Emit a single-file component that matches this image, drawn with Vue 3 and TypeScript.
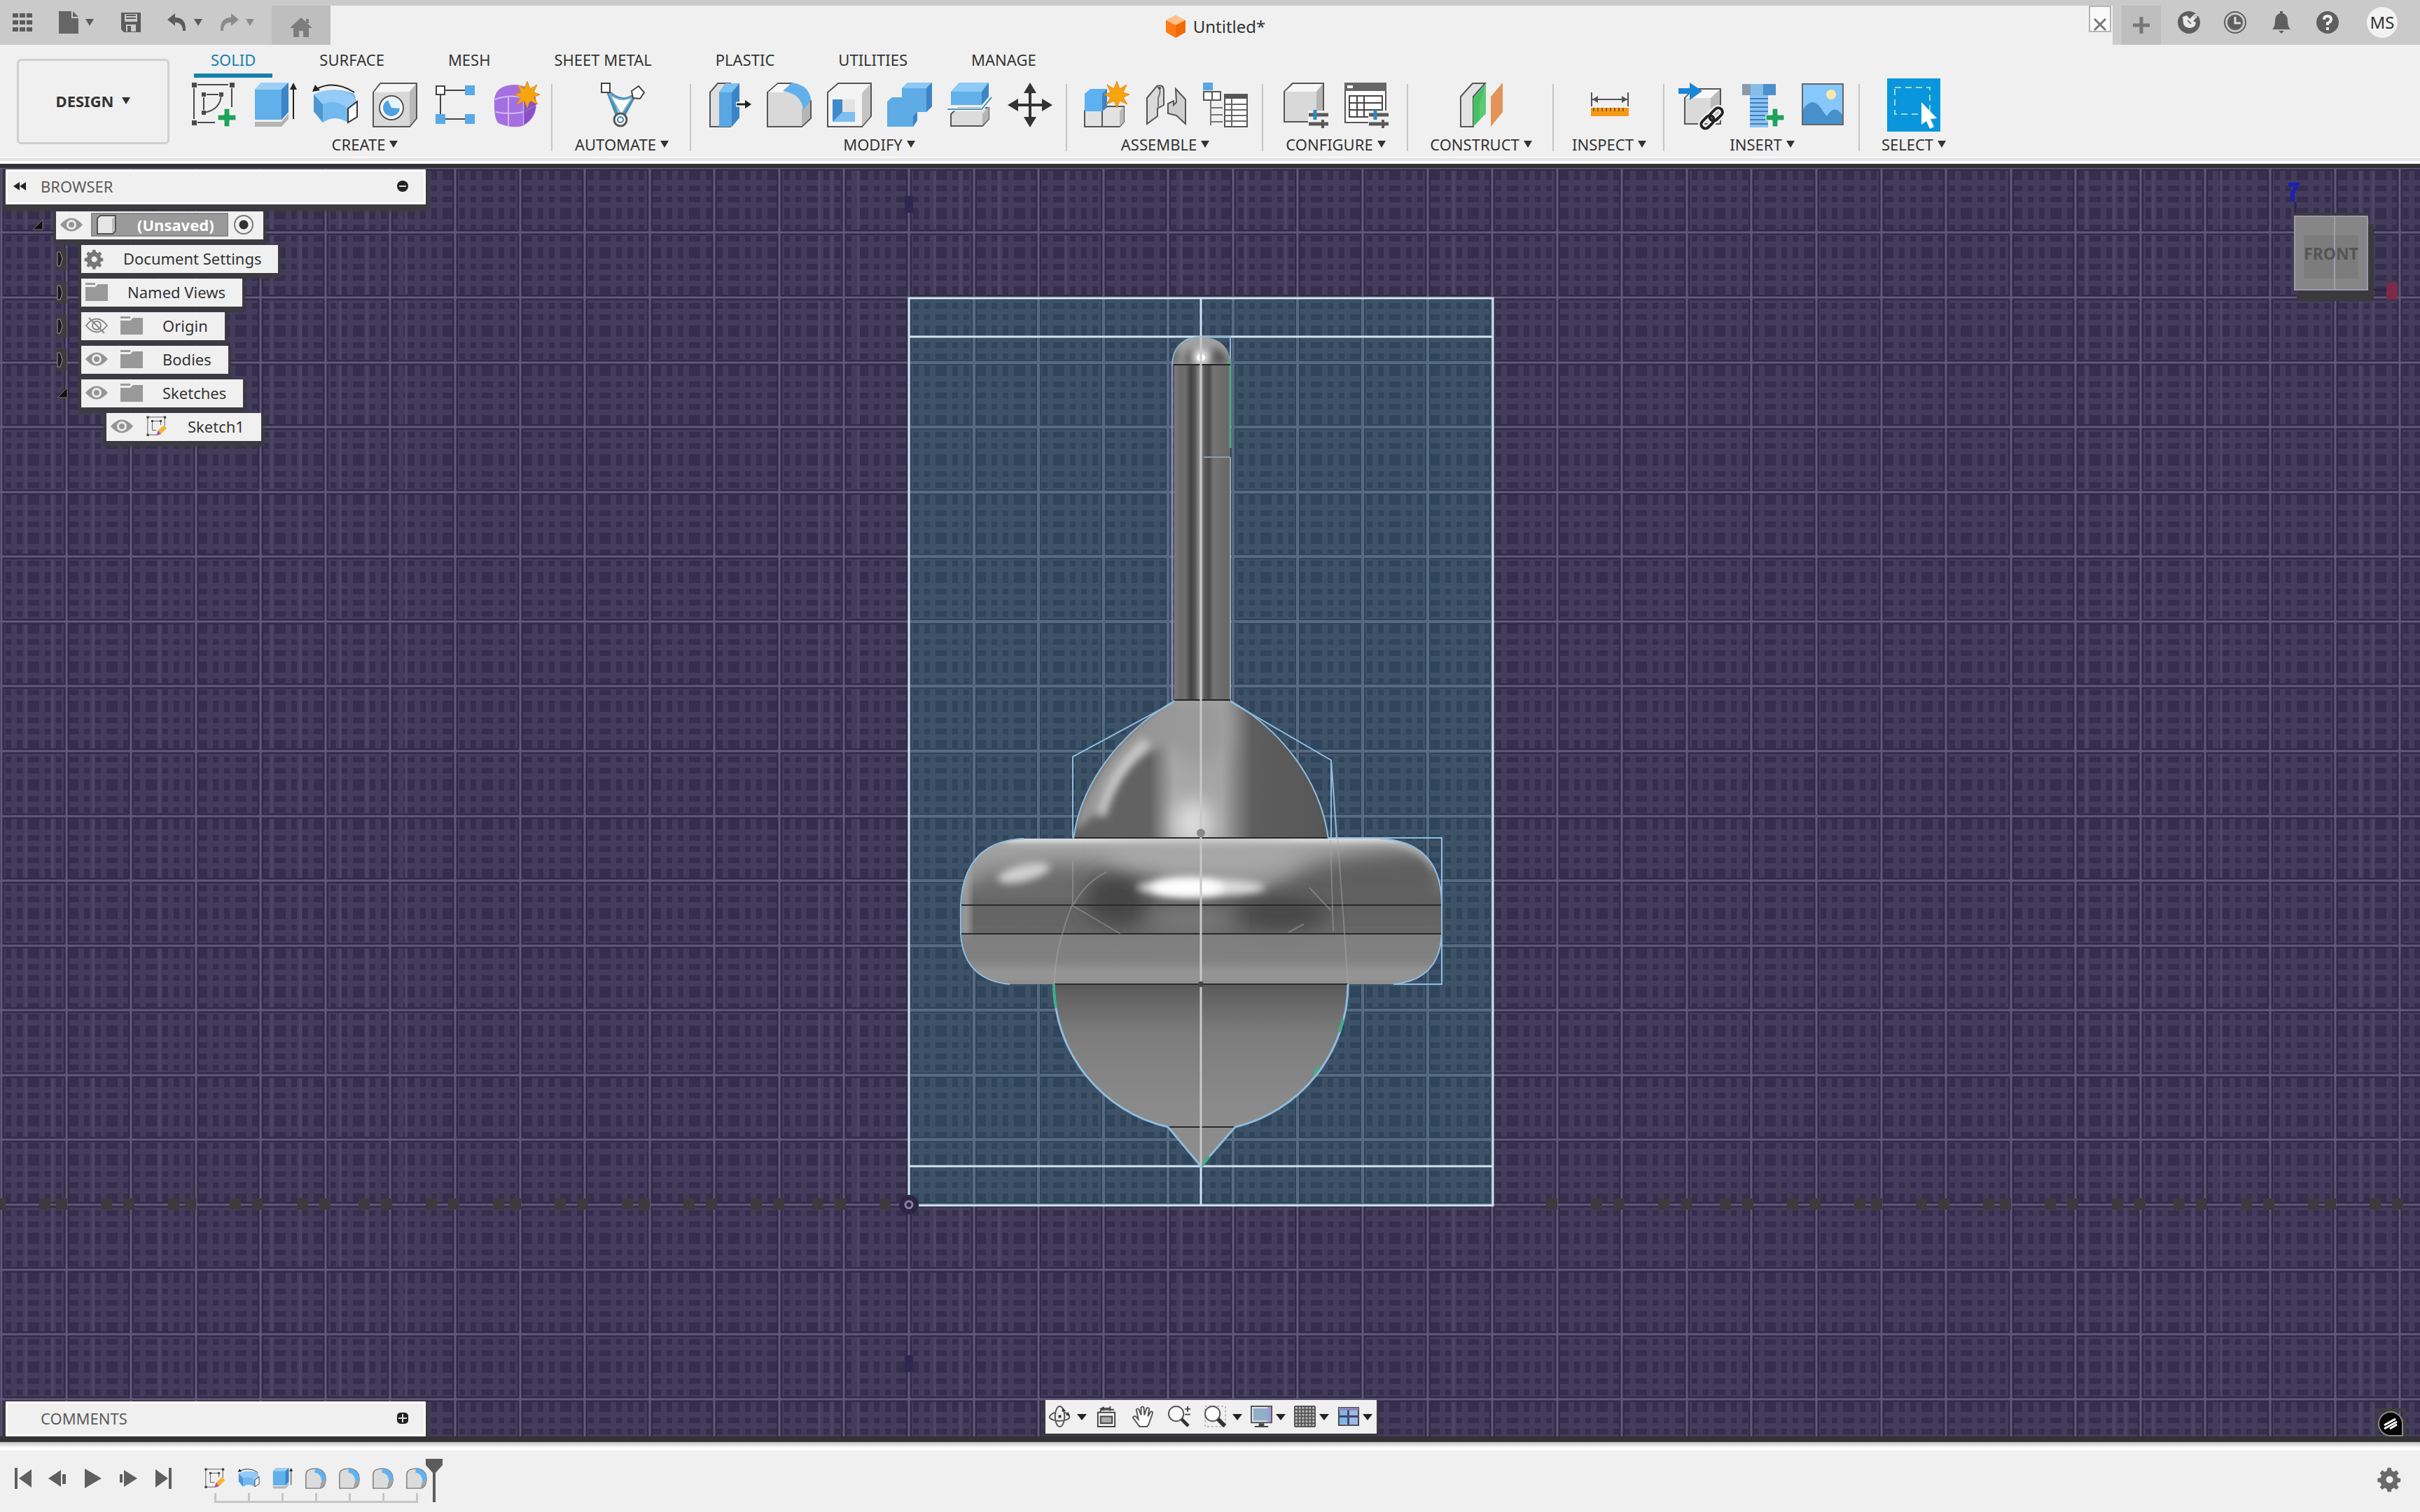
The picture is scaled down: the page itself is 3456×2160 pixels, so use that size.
<script setup lang="ts">
import { ref } from 'vue'

interface Tool { icon: string; label: string }
interface Group { name: string; width: number; tools: Tool[] }
interface Row { label: string; kind: 'gear' | 'folder' | 'sketch'; eye: '' | 'on' | 'off'; arrow: '' | 'closed' | 'open'; level: number }

const star = '<path d="M49 -2l4 11 10-6-5 11 9 3-9 4 6 10-11-5-4 10-4-10-11 5 6-10-9-4 9-3-5-11 10 6z" fill="#f6a50f" stroke="#e08a1e" stroke-width="1"/>'
const plus = '<path d="M46 37h8v9h9v8h-9v9h-8v-9h-9v-8h9z" fill="#1fa35c" stroke="#fff" stroke-width="1"/>'
const sliders = '<path d="M35 40h30v26h-30z" fill="#f0f0f0"/><path d="M36 46h28M36 59h28" stroke="#5a5a5a" stroke-width="5"/><path d="M45 39v14" stroke="#2f86bd" stroke-width="5"/><path d="M56 53v12" stroke="#5a5a5a" stroke-width="4"/>'
const box = '<path d="M1 14L11 1H63V51L53 63H1z" fill="#d9d9d9" stroke="#555" stroke-width="2" stroke-linejoin="round"/><path d="M2 14L12 2H62L53 13z" fill="#f6f6f6"/><path d="M53 13L62 2V51L53 62z" fill="#b9b9b9"/>'

const art: Record<string, string> = {
  sketch: '<g fill="none" stroke="#4a4a4a" stroke-width="2"><path d="M3 8V52M8 3H52M57 8V35M8 57H33M17 21V39M21 17H38M42 17Q41 39 17 43"/></g><g fill="#4a4a4a"><path d="M0 0h7v7H0zM54 0h7v7h-7zM0 54h7v7H0zM14 14h6v6h-6zM39 14h6v6h-6zM14 40h6v6h-6z"/></g>' + plus,
  extrude: '<path d="M4 56H42L52 44V52L42 63H4z" fill="#b4b4b4"/><path d="M4 10L13 0H52V42L42 53H4z" fill="#61b0ea"/><path d="M4 10L13 0H52L42 10z" fill="#9ccff5"/><path d="M42 10L52 0V42L42 53z" fill="#3d84c6"/><path d="M59 52V8" stroke="#222" stroke-width="2"/><path d="M59 0l5 10H54z" fill="#222"/>',
  revolve: '<path d="M2 17Q32 5 60 16L63 27 51 37V57Q32 45 15 57L2 41z" fill="#72b9ef"/><path d="M2 17L15 31V57L2 41z" fill="#4f97d3"/><path d="M15 31Q32 22 51 37L63 27Q60 14 32 10 12 11 2 17z" fill="#94cbf7"/><path d="M51 37L64 27V49L51 57z" fill="#fff" stroke="#333" stroke-width="2"/><path d="M6 9Q32 -4 60 14" fill="none" stroke="#222" stroke-width="2"/><path d="M0 13l4-10 7 8z" fill="#222"/>',
  hole: box + '<circle cx="27" cy="36" r="17" fill="#fff" stroke="#555" stroke-width="2"/><circle cx="27" cy="36" r="12" fill="#4fa3e0"/><path d="M27 36L21 23A13 13 0 0 1 40 37z" fill="#e6f2fb"/>',
  pattern: '<path d="M18 11H46M11 18V46M18 52H46" stroke="#444" stroke-width="2"/><path d="M5 5h12v12H5z" fill="#fff" stroke="#444" stroke-width="2"/><path d="M46 4h14v14H46zM4 45h14v14H4zM46 45h14v14H46z" fill="#58a9e6"/>',
  form: '<path d="M2 24Q4 4 30 3 60 4 62 30 62 52 42 62 26 66 8 58 1 52 2 24z" fill="#a46fe0"/><path d="M3 24Q24 16 44 22V62M22 19V62M4 42Q24 46 44 42L62 32M44 22L60 18" fill="none" stroke="#d5b8f7" stroke-width="2"/><path d="M44 22L60 16Q66 46 44 61z" fill="#7b45b9" opacity=".7"/>' + star,
  automate: '<path d="M12 12Q30 32 50 18L34 48H26z" fill="none" stroke="#4d8fae" stroke-width="5"/><path d="M14 16Q31 30 48 20L31 46z" fill="#fff" stroke="#79b3d4" stroke-width="2"/><path d="M3 1h12v13H3z" fill="#fff" stroke="#444" stroke-width="2"/><path d="M46 12l10-7 8 9-6 9-10-1z" fill="#fff" stroke="#444" stroke-width="2"/><circle cx="30" cy="53" r="9" fill="#fff" stroke="#555" stroke-width="3"/><circle cx="30" cy="53" r="4" fill="#fff" stroke="#3d7fa8" stroke-width="2"/>',
  press: '<path d="M5 14L16 1H34V63H5z" fill="#dedede" stroke="#555" stroke-width="2"/><path d="M18 14L27 1H47V50L36 63H18z" fill="#58a6e2"/><path d="M36 14L47 1V50L36 63z" fill="#3d84c6"/><path d="M18 14L27 1H47L36 14z" fill="#7cc0f2"/><path d="M42 31H56" stroke="#fff" stroke-width="7"/><path d="M43 31H58" stroke="#222" stroke-width="3"/><path d="M64 31l-9-6v12z" fill="#222"/>',
  fillet: '<path d="M1 14L16 1H36L63 26V51L50 63H1z" fill="#d9d9d9" stroke="#555" stroke-width="2"/><path d="M2 14L16 2H34L24 14z" fill="#f8f8f8"/><path d="M50 38L62 26V50L50 62z" fill="#b5b5b5"/><path d="M23 12L36 0Q62 4 63 26L52 39Q50 16 23 12z" fill="#62b0ea"/>',
  shell: '<path d="M1 14L16 1H63V48L50 63H1z" fill="#f3f3f3" stroke="#555" stroke-width="2"/><path d="M50 15L62 2V48L50 62z" fill="#c4c4c4"/><path d="M8 24h32v32H8z" fill="#fff"/><path d="M8 24H22V44L8 56z" fill="#3f8aca"/><path d="M8 56L22 42H40V56z" fill="#7dbff0"/><path d="M22 24h18v18H22z" fill="#e3e3e3"/>',
  combine: '<path d="M0 27L7 21H21V8L29 0H64V34L56 42H43V54L37 63H0z" fill="#5fabe5"/><path d="M21 8L29 0H64L56 8z" fill="#8bc8f5"/><path d="M56 8L64 0V34L56 42zM37 48L43 42V54L37 63z" fill="#3d84c6"/>',
  split: '<path d="M5 45L15 36H59V52L50 62H5z" fill="#dcdcdc" stroke="#555" stroke-width="2"/><path d="M50 45L59 34V52L50 61z" fill="#b5b5b5"/><path d="M5 13L17 0H59V20L49 32H5z" fill="#62b0ea"/><path d="M5 13L17 0H59L49 13z" fill="#8ecbf6"/><path d="M49 13L59 0V20L49 32z" fill="#3d84c6"/><path d="M0 38H49L63 21" fill="none" stroke="#fff" stroke-width="5"/><path d="M0 38H49L63 21" fill="none" stroke="#4a8fbc" stroke-width="2"/>',
  move: '<path d="M32 8V56M8 32H56" stroke="#333" stroke-width="4"/><path d="M32 0l9 15H23zM32 64l9-15H23zM0 32l15-9v18zM64 32l-15-9v18z" fill="#333"/>',
  component: '<path d="M3 40H28V63H3zM28 40L35 34H59V56L53 63H28z" fill="#e2e2e2" stroke="#555" stroke-width="2"/><path d="M53 41L59 34V56L53 63z" fill="#b9b9b9"/><path d="M3 16L11 9H35V34L28 41H3z" fill="#5fb0f0"/><path d="M28 16L35 9V34L28 41z" fill="#3d84c6"/>' + star,
  joint: '<path d="M6 22L20 5Q29 2 30 10V32L21 37V48L6 59z" fill="#dadada" stroke="#555" stroke-width="2"/><path d="M20 6Q28 8 22 22V36" fill="none" stroke="#777" stroke-width="2"/><path d="M47 9L61 24V59L48 47 36 44V30L44 26V32L48 28z" fill="#cfcfcf" stroke="#555" stroke-width="2"/><circle cx="24" cy="8" r="2" fill="#555"/>',
  bom: '<path d="M0 0h14v11H0z" fill="#58a6e2"/><path d="M1 13h12v12H1zM13 13h12v12H13z" fill="#fff" stroke="#555" stroke-width="2"/><path d="M11 26V61M11 36H28M11 46H28M11 56H28" stroke="#777" stroke-width="2"/><path d="M31 17h32v46H31z" fill="#fff" stroke="#555" stroke-width="2"/><path d="M31 16h32v7H31z" fill="#555"/><path d="M31 31h32M31 39h32M31 47h32M31 55h32M41 23v40" stroke="#666" stroke-width="2"/>',
  configure: '<path d="M1 13L13 1H57V46L48 56H1z" fill="#d9d9d9" stroke="#555" stroke-width="2"/><path d="M2 13L14 2H56L47 13z" fill="#f6f6f6"/><path d="M47 13L56 2V46L47 55z" fill="#b5b5b5"/>' + sliders,
  table: '<path d="M2 1h58v56H2z" fill="#fff" stroke="#555" stroke-width="2"/><path d="M1 0h60v12H1z" fill="#666"/><path d="M5 4h8v4H5z" fill="#fff"/><path d="M8 19h47v30H8zM8 29h47M8 39h47M19 19v30M29 19v30" fill="none" stroke="#444" stroke-width="2"/>' + sliders,
  plane: '<path d="M3 20L20 1H38L21 20V63H3z" fill="#e2e2e2" stroke="#555" stroke-width="2"/><path d="M21 22L39 2V44L21 63z" fill="#45c065"/><path d="M30 30L39 2V44L30 53z" fill="#6ed07f" opacity=".6"/><path d="M46 20L63 0V42L46 63z" fill="#e2945a"/>',
  inspect: '<path d="M7 14V34M59 14V34M8 24H58" stroke="#555" stroke-width="2"/><path d="M8 24l8-5v10zM58 24l-8-5v10z" fill="#555"/><path d="M6 36h54v12H6z" fill="#f59a16"/><path d="M10 36v5M16 36v5M22 36v5M28 36v5M34 36v5M40 36v5M46 36v5M52 36v5" stroke="#8a5a0a" stroke-width="2"/>',
  derive: '<path d="M7 22L20 9H58V59H7z" fill="#dadada" stroke="#555" stroke-width="2"/><path d="M8 22L20 10H57L44 22z" fill="#f8f8f8"/><path d="M44 22L57 10V46L44 58z" fill="#bbb"/><path d="M-2 8H14V0L32 12 14 25V16H-2z" fill="#1a86d8"/><g fill="none" stroke="#f0f0f0" stroke-width="9"><rect x="34" y="46" width="12" height="21" rx="6" transform="rotate(45 40 56)"/><rect x="46" y="35" width="12" height="21" rx="6" transform="rotate(45 52 45)"/></g><g fill="none" stroke="#222" stroke-width="4"><rect x="34" y="46" width="12" height="21" rx="6" transform="rotate(45 40 56)"/><rect x="46" y="35" width="12" height="21" rx="6" transform="rotate(45 52 45)"/></g>',
  bolt: '<path d="M3 2h48v16H3z" fill="#4a90cc"/><path d="M3 2h12v16H3z" fill="#8b9aa8"/><path d="M15 2h18v16H15z" fill="#84bdea"/><path d="M14 18h26v46H14z" fill="#8cc4f0"/><path d="M14 23h26M14 29h26M14 35h26M14 41h26M14 47h26M14 53h26M14 59h26" stroke="#3c7fc0" stroke-width="2"/>' + plus,
  image: '<path d="M3 2h58v58H3z" fill="#86c8fb" stroke="#666" stroke-width="2"/><path d="M4 38Q19 16 33 42L38 48Q48 30 60 46V59H4z" fill="#4790cc"/><circle cx="44" cy="17" r="7" fill="#fde9a8"/>',
  select: '<path d="M7 7H57V45H7z" transform="translate(-2 0)" fill="none" stroke="#9fdbc4" stroke-width="2" stroke-dasharray="9 6"/><path d="M43 28L65 51 56 52 61 63 55 66 50 55 43 60z" fill="#fff"/>',
  tinySketch: '<g fill="none" stroke="#555" stroke-width="2"><path d="M4 4V60M2 4H58M56 4V30M4 58H34M18 16H44V28M18 16V44H30"/></g><g fill="#444"><path d="M1 1h7v7H1zM53 1h7v7h-7zM1 55h7v7H1zM15 13h6v6h-6zM41 13h6v6h-6z"/></g><path d="M30 60L36 44 54 28 62 38 44 56z" fill="#f2b632"/><path d="M30 60L36 44 44 56z" fill="#b257a8"/>'
}
art.tinyFillet = '<path d="M2 18Q4 2 34 2 62 6 62 36 60 60 44 62H2z" fill="#dcdcdc" stroke="#777" stroke-width="3"/><path d="M30 2Q60 4 62 34L50 44Q50 18 28 14z" fill="#5fb3f2"/><path d="M48 44L62 34Q62 56 44 62z" fill="#a5a5a5"/>'

const gearPath = 'M13 0h6l1 5 4 2 4-3 4 5-3 4 1 4 5 1v6l-5 1-1 4 3 4-4 4-4-3-4 2-1 5h-6l-1-5-4-2-4 3-4-4 3-4-2-4-5-1v-6l5-1 2-4-3-4 4-5 4 3 4-2zM16 14a6 6 0 1 0 1 0z'
const nav: Record<string, string> = {
  orbit: '<g fill="none" stroke="#555" stroke-width="2"><ellipse cx="16" cy="16" rx="7" ry="15"/><path d="M9 10Q-2 15 2 19 14 26 28 20 34 16 23 10"/></g><path d="M14 14h4v4h-4zM20 3l5 5-6 1zM28 9l3 6-6-1z" fill="#333"/>',
  look: '<g fill="#f8f8f8" stroke="#444" stroke-width="2"><path d="M4 10H29V31H4zM7 10L9 6H28"/></g><path d="M8 16h17v10H8z" fill="#aaa" stroke="#444" stroke-width="2"/><path d="M22 1v7M22 4H10" stroke="#444" stroke-width="2"/><path d="M6 5l7-4v7z" fill="#444"/>',
  hand: '<path d="M12 31L2 18Q2 15 6 16L10 20 7 6Q9 3 11 6L14 14V3Q16 0 18 3L19 14 22 4Q25 2 26 5L24 16 28 9Q31 8 31 11L25 28 23 31z" fill="#fff" stroke="#555" stroke-width="2"/>',
  zoom: '<circle cx="12" cy="12" r="11" fill="#f8f8f8" stroke="#555" stroke-width="2"/><path d="M20 20L30 30" stroke="#333" stroke-width="5"/><path d="M25 5h8M29 1v8M25 13h8" stroke="#444" stroke-width="2"/>',
  fit: '<path d="M1 1H31V31H1z" fill="none" stroke="#bbb" stroke-width="2" stroke-dasharray="3 3"/><circle cx="12" cy="12" r="11" fill="#fff" stroke="#555" stroke-width="2"/><path d="M20 20L30 30" stroke="#333" stroke-width="6"/>',
  display: '<path d="M1 1H31V25H1z" fill="#e8e8f4" stroke="#555" stroke-width="2"/><path d="M4 4H26V22H4z" fill="#92aec6"/><path d="M25 2h5v22h-5z" fill="#a49ad8"/><path d="M12 26h8v4h6v2H6v-2h6z" fill="#444"/>',
  grid: '<path d="M1 1H31V31H1z" fill="#bbb"/><path d="M1 1v30M6 1v30M11 1v30M16 1v30M21 1v30M26 1v30M31 1v30M1 1h30M1 6h30M1 11h30M1 16h30M1 21h30M1 26h30M1 31h30" stroke="#555" stroke-width="2"/>',
  views: '<path d="M2 3H31V29H2z" fill="#9fb6ea" stroke="#444" stroke-width="2"/><path d="M3 8h12v18H3z" fill="#7bb6e6"/><path d="M16 4v24M3 16h27" stroke="#446" stroke-width="3"/><path d="M2 3h29v4H2z" fill="#8a86b4"/>'
}
const navItems = [
  { icon: 'orbit', label: 'Orbit', caret: true }, { icon: 'look', label: 'Look At', caret: false },
  { icon: 'hand', label: 'Pan', caret: false }, { icon: 'zoom', label: 'Zoom', caret: false },
  { icon: 'fit', label: 'Fit', caret: true }, { icon: 'display', label: 'Display Settings', caret: true },
  { icon: 'grid', label: 'Grid and Snaps', caret: true }, { icon: 'views', label: 'Viewports', caret: true }
]

const tabs = ['SOLID', 'SURFACE', 'MESH', 'SHEET METAL', 'PLASTIC', 'UTILITIES', 'MANAGE']
const active = ref('SOLID')
const t = (icon: string, label: string): Tool => ({ icon, label })
const groups: Group[] = [
  { name: 'CREATE', width: 536, tools: [t('sketch', 'Create Sketch'), t('extrude', 'Extrude'), t('revolve', 'Revolve'), t('hole', 'Hole'), t('pattern', 'Pattern'), t('form', 'Create Form')] },
  { name: 'AUTOMATE', width: 198, tools: [t('automate', 'Automated Modeling')] },
  { name: 'MODIFY', width: 537, tools: [t('press', 'Press Pull'), t('fillet', 'Fillet'), t('shell', 'Shell'), t('combine', 'Combine'), t('split', 'Split Body'), t('move', 'Move')] },
  { name: 'ASSEMBLE', width: 280, tools: [t('component', 'New Component'), t('joint', 'Joint'), t('bom', 'Bill of Materials')] },
  { name: 'CONFIGURE', width: 207, tools: [t('configure', 'Configure'), t('table', 'Configuration Table')] },
  { name: 'CONSTRUCT', width: 208, tools: [t('plane', 'Offset Plane')] },
  { name: 'INSPECT', width: 158, tools: [t('inspect', 'Measure')] },
  { name: 'INSERT', width: 279, tools: [t('derive', 'Derive'), t('bolt', 'Fastener'), t('image', 'Canvas')] },
  { name: 'SELECT', width: 154, tools: [t('select', 'Select')] }
]
const rows: Row[] = [
  { label: 'Document Settings', kind: 'gear', eye: '', arrow: 'closed', level: 1 },
  { label: 'Named Views', kind: 'folder', eye: '', arrow: 'closed', level: 1 },
  { label: 'Origin', kind: 'folder', eye: 'off', arrow: 'closed', level: 1 },
  { label: 'Bodies', kind: 'folder', eye: 'on', arrow: 'closed', level: 1 },
  { label: 'Sketches', kind: 'folder', eye: 'on', arrow: 'open', level: 1 },
  { label: 'Sketch1', kind: 'sketch', eye: 'on', arrow: '', level: 2 }
]
const playback = [
  { label: 'Go to start', d: 'M4 1h4v30H4zM28 3V29L10 16z' },
  { label: 'Step back', d: 'M20 4V28L2 16zM22 10h5v14h-5z' },
  { label: 'Play', d: 'M4 2L28 16 4 30z' },
  { label: 'Step forward', d: 'M4 10h4v12H4zM10 4V28L29 16z' },
  { label: 'Go to end', d: 'M5 3V29L23 16zM24 1h4v30h-4z' }
]
const history = ['tinySketch', 'revolve', 'extrude', 'tinyFillet', 'tinyFillet', 'tinyFillet', 'tinyFillet']

// Sketch grid: ten-unit major lines with five divisions, measured from the origin point.
const originX = 1298
const originY = 1721
const major = 1296 / 14
const minor = major / 5
const snap = (v: number) => Math.floor(v / 8) * 8
let minorPath = ''
let majorPath = ''
for (let k = -72; k < 120; k++) {
  minorPath += `M${snap(originX + k * minor)} 232h8v1830h-8z`
  minorPath += `M0 ${snap(originY - (k + 50) * minor) + 1}h3456v8H0z`
}
for (let k = -15; k < 24; k++) {
  const x = Math.round(originX + k * major)
  majorPath += `M${x} 232V2062`
}
for (let k = -4; k < 17; k++) {
  const y = Math.round(originY - k * major)
  majorPath += `M0 ${y}H3456`
}
const streaks = [37, 75, 133, 228, 388, 429, 486, 524, 580, 1170, 1188, 1226, 1335, 1372, 1427, 1522, 1687, 1723, 1779, 1836, 2076, 2980, 3019, 3036, 3075, 3132, 3172, 3371, 3389]
const streakPath = streaks.map(x => `M${x} 232V2062`).join('')
const axisTicks: number[] = []
for (let k = -14; k < 24; k++) {
  if (k < 0 || k > 9) {
    axisTicks.push(snap(originX + k * major) - 8, snap(originX + (k + 0.5) * major) + 8)
  }
}
</script>

<template>
  <div class="app">
    <header class="titlebar">
      <div class="quick">
        <button class="q" aria-label="Data panel"><svg width="30" height="30" viewBox="0 0 30 30"><path d="M1 2h8v6H1zM11 2h8v6h-8zM21 2h8v6h-8zM1 12h8v6H1zM11 12h8v6h-8zM21 12h8v6h-8zM1 22h8v6H1zM11 22h8v6h-8zM21 22h8v6h-8z" fill="#5c5c5c" /></svg></button>
        <button class="q file" aria-label="File"><svg width="28" height="32" viewBox="0 0 28 32"><path d="M0 0H18V10H28V32H0z" fill="#666" /><path d="M20 0L28 8H20z" fill="#666" /></svg><i class="caret soft" /></button>
        <button class="q save" aria-label="Save"><svg width="30" height="30" viewBox="0 0 30 30"><path d="M1 1H29V29H5L1 25z" fill="#5c5c5c" /><path d="M6 3h18v11H6zM8 18h14v10H8z" fill="#cacaca" /><path d="M8 5h14M8 9h14" stroke="#5c5c5c" stroke-width="2" /><path d="M10 20h5v8h-5z" fill="#5c5c5c" /></svg></button>
        <button class="q undo" aria-label="Undo"><svg width="28" height="26" viewBox="0 0 28 26"><path d="M0 9L11 0V6Q27 6 26 25H22Q22 13 11 13V18z" fill="#5c5c5c" /></svg><i class="caret soft" /></button>
        <button class="q redo" aria-label="Redo"><svg width="28" height="26" viewBox="0 0 28 26"><path d="M28 9L17 0V6Q1 6 2 25H6Q6 13 17 13V18z" fill="#8a8a8a" /></svg><i class="caret dim" /></button>
      </div>
      <button class="home" aria-label="Home"><svg width="32" height="28" viewBox="0 0 32 28"><path d="M16 0L32 15H27V28H19V19H13V28H5V15H0zM23 2h4v6h-4z" fill="#7d7d7d" /></svg></button>
      <div class="doc">
        <svg width="30" height="32" viewBox="0 0 30 32"><path d="M15 0L29 7V24L15 32 1 24V7z" fill="#ff7a14" /><path d="M15 0L29 7 15 14 1 7z" fill="#ffc08c" /><path d="M15 14L29 7V24L15 32z" fill="#f06a06" /></svg>
        <span>Untitled*</span>
        <button class="close" aria-label="Close"><svg width="20" height="18" viewBox="0 0 20 18"><path d="M2 1L18 17M18 1L2 17" stroke="#777" stroke-width="3" /></svg></button>
      </div>
      <button class="newtab" aria-label="New tab"><svg width="24" height="24" viewBox="0 0 24 24"><path d="M12 0V24M0 12H24" stroke="#777" stroke-width="5" /></svg></button>
      <div class="status">
        <button class="s" aria-label="Extensions"><svg width="32" height="32" viewBox="0 0 32 32"><circle cx="16" cy="16" r="16" fill="#5f5f5f" /><path d="M7 8L13 6 17 11 24 4 28 8 22 14 26 16Q25 24 17 24 9 23 8 17z" fill="#e8e8e8" /><path d="M14 13l5 5" stroke="#777" stroke-width="2" /><path d="M23 9L31 1" stroke="#cacaca" stroke-width="4" /></svg></button>
        <button class="s" aria-label="Job status"><svg width="32" height="32" viewBox="0 0 32 32"><circle cx="16" cy="16" r="15" fill="none" stroke="#5f5f5f" stroke-width="2" /><circle cx="16" cy="16" r="11" fill="#5f5f5f" /><path d="M16 8V17H24" fill="none" stroke="#ddd" stroke-width="3" /></svg></button>
        <button class="s" aria-label="Notifications"><svg width="32" height="32" viewBox="0 0 32 32"><path d="M14 0h4v3Q25 5 25 14 25 22 29 26H3Q7 22 7 14 7 5 14 3zM12 28h8l-4 4z" fill="#5f5f5f" /></svg></button>
        <button class="s" aria-label="Help"><svg width="32" height="32" viewBox="0 0 32 32"><circle cx="16" cy="16" r="16" fill="#5f5f5f" /><path d="M11 12Q11 7 16 7 21 7 21 12 21 15 16 17V20" fill="none" stroke="#eee" stroke-width="4" /><path d="M14 23h4v4h-4z" fill="#eee" /></svg></button>
        <button class="avatar">MS</button>
      </div>
    </header>

    <section class="ribbon">
      <button class="design">DESIGN <i class="caret" /></button>
      <div class="tools">
        <nav class="tabs">
          <button v-for="tab in tabs" :key="tab" class="tab" :class="{ on: tab === active }" @click="active = tab">{{ tab }}</button>
        </nav>
        <div class="groups">
          <div v-for="g in groups" :key="g.name" class="group" :style="{ width: g.width + 'px' }">
            <div class="icons">
              <button v-for="tool in g.tools" :key="tool.icon" class="tool" :class="{ chosen: tool.icon === 'select' }" :aria-label="tool.label">
                <svg width="64" height="64" viewBox="0 0 64 64" v-html="art[tool.icon]" />
              </button>
            </div>
            <button class="glabel">{{ g.name }}<i class="caret" /></button>
          </div>
        </div>
      </div>
    </section>

    <main class="canvas">
      <svg class="scene" viewBox="0 234 3456 1826" preserveAspectRatio="xMidYMid slice" aria-label="Model view">
        <defs>
          <clipPath id="plate"><rect x="1298" y="426" width="834" height="1296" /></clipPath>
          <clipPath id="capClip"><path d="M1676 521C1676 496 1690 482 1716 482 1742 482 1757 496 1757 521Z" /></clipPath>
          <clipPath id="domeClip"><path d="M1677 1001C1610 1040 1545 1110 1533 1198H1897C1885 1110 1825 1040 1757 1001Z" /></clipPath>
          <clipPath id="ringClip"><path d="M1462 1198H1970Q2059 1202 2059 1293V1334Q2056 1400 1990 1406H1442Q1376 1400 1372 1334V1293Q1376 1202 1462 1198Z" /></clipPath>
          <clipPath id="ballClip"><path d="M1505 1406A210 210 0 0 0 1668 1610H1764A210 210 0 0 0 1925 1406Z" /></clipPath>
          <linearGradient id="stem"><stop offset="0" stop-color="#7c7c7c" /><stop offset=".1" stop-color="#6a6a6a" /><stop offset=".2" stop-color="#6e6e6e" /><stop offset=".3" stop-color="#424242" /><stop offset=".38" stop-color="#5c5c5c" /><stop offset=".47" stop-color="#a0a0a0" /><stop offset=".53" stop-color="#606060" /><stop offset=".62" stop-color="#4b4b4b" /><stop offset=".7" stop-color="#747474" /><stop offset="1" stop-color="#666" /></linearGradient>
          <linearGradient id="dome"><stop offset="0" stop-color="#555" /><stop offset=".12" stop-color="#626262" /><stop offset=".33" stop-color="#626262" /><stop offset=".41" stop-color="#a8a8a8" /><stop offset=".57" stop-color="#a4a4a4" /><stop offset=".67" stop-color="#5e5e5e" /><stop offset="1" stop-color="#545454" /></linearGradient>
          <linearGradient id="ring" x1="0" x2="0" y1="0" y2="1"><stop offset="0" stop-color="#e4e4e4" /><stop offset=".05" stop-color="#a4a4a4" /><stop offset=".3" stop-color="#929292" /><stop offset=".42" stop-color="#606060" /><stop offset=".65" stop-color="#686868" /><stop offset=".66" stop-color="#7c7c7c" /><stop offset=".95" stop-color="#909090" /><stop offset="1" stop-color="#ababab" /></linearGradient>
          <linearGradient id="ball" x1="0" x2="0" y1="0" y2="1"><stop offset="0" stop-color="#565656" /><stop offset=".15" stop-color="#686868" /><stop offset=".35" stop-color="#7c7c7c" /><stop offset=".8" stop-color="#8a8a8a" /><stop offset="1" stop-color="#8e8e8e" /></linearGradient>
          <filter id="b6" x="-50%" y="-100%" width="200%" height="300%"><feGaussianBlur stdDeviation="6" /></filter>
          <filter id="b14" x="-50%" y="-100%" width="200%" height="300%"><feGaussianBlur stdDeviation="14" /></filter>
        </defs>
        <rect y="230" width="3456" height="1834" fill="#352f4d" />
        <path :d="minorPath" fill="#433d5b" />
        <path :d="streakPath" stroke="#4c4664" stroke-width="4" />
        <path :d="majorPath" stroke="#312b48" stroke-width="8" fill="none" />
        <path :d="majorPath" stroke="#605a79" stroke-width="3" fill="none" />
        <rect v-for="(x, i) in axisTicks" :key="i" :x="x" y="1712" width="16" height="16" fill="#3c3a3d" />
        <path d="M1292 280H1304V304H1292ZM1292 1936H1304V1960H1292Z" fill="#2b2950" />
        <g clip-path="url(#plate)">
          <rect x="1298" y="426" width="834" height="1296" fill="#2f455b" />
          <path :d="minorPath" fill="#3d5267" />
          <path :d="majorPath" stroke="#2f455b" stroke-width="8" fill="none" />
          <path :d="majorPath" stroke="#566b80" stroke-width="4" fill="none" />
        </g>
        <g fill="none" stroke="#cfe4ef" stroke-width="3"><path d="M1298 426H2132V1722H1298ZM1298 481H2132M1298 1666H2132M1715 426V481M1715 1666V1722" /></g>

        <g clip-path="url(#capClip)">
          <rect x="1670" y="480" width="92" height="44" fill="#a2a2a2" />
          <path d="M1690 521Q1694 500 1702 496L1706 521ZM1728 521L1732 496Q1752 500 1757 521Z" fill="#555" filter="url(#b6)" />
          <path d="M1670 521V500H1684V521Z" fill="#666" filter="url(#b6)" />
          <ellipse cx="1715" cy="510" rx="10" ry="9" fill="#fff" filter="url(#b6)" />
          <ellipse cx="1715" cy="511" rx="6" ry="5" fill="#fff" />
        </g>
        <rect x="1677" y="521" width="80" height="480" fill="url(#stem)" />
        <g fill="none" stroke-width="3"><path d="M1674 521V1001" stroke="#8f86b0" /><path d="M1757 653V1001" stroke="#a5a5a5" stroke-width="2" /><path d="M1757 513V640" stroke="#55a88a" /><path d="M1674 521C1675 496 1690 481 1716 481H1757V513" stroke="#8fb9d6" stroke-width="2" /><path d="M1719 653H1757" stroke="#8f9ba5" stroke-width="2" /><path d="M1676 521H1757M1677 1000H1757" stroke="#222" stroke-width="2" /></g>

        <g clip-path="url(#domeClip)">
          <rect x="1500" y="1001" width="430" height="200" fill="url(#dome)" />
          <path d="M1677 996Q1570 1060 1530 1190L1570 1160Q1600 1080 1680 1060H1715Z" fill="#969696" filter="url(#b6)" />
          <ellipse cx="1710" cy="1040" rx="46" ry="50" fill="#9a9a9a" filter="url(#b14)" />
          <path d="M1572 1165Q1590 1100 1638 1060" stroke="#cacaca" stroke-width="14" fill="none" filter="url(#b6)" />
          <ellipse cx="1704" cy="1176" rx="28" ry="34" fill="#dcdcdc" filter="url(#b14)" />
        </g>
        <g clip-path="url(#ballClip)">
          <rect x="1500" y="1400" width="430" height="220" fill="url(#ball)" />
        </g>
        <path d="M1668 1610H1764L1715 1666Z" fill="#8c8c8c" />
        <g clip-path="url(#ringClip)">
          <rect x="1370" y="1196" width="692" height="212" fill="url(#ring)" />
          <path d="M1372 1290Q1380 1240 1520 1236L1660 1240V1292H1372Z" fill="#6a6a6a" filter="url(#b14)" />
          <path d="M1800 1292Q1860 1210 2060 1216V1292Z" fill="#5e5e5e" filter="url(#b14)" />
          <ellipse cx="1595" cy="1285" rx="46" ry="38" fill="#454545" filter="url(#b14)" />
          <ellipse cx="1830" cy="1305" rx="66" ry="24" fill="#474747" filter="url(#b14)" />
          <ellipse cx="1700" cy="1315" rx="60" ry="20" fill="#787878" filter="url(#b14)" />
          <ellipse cx="1715" cy="1222" rx="140" ry="24" fill="#a8a8a8" filter="url(#b14)" />
          <ellipse cx="1462" cy="1247" rx="38" ry="12" fill="#d0d0d0" filter="url(#b6)" transform="rotate(-14 1462 1247)" />
          <ellipse cx="1715" cy="1268" rx="92" ry="12" fill="#ddd" filter="url(#b6)" />
          <ellipse cx="1696" cy="1268" rx="52" ry="13" fill="#fff" filter="url(#b6)" />
          <path d="M1372 1230H1384V1340H1372Z" fill="#aaa" filter="url(#b6)" />
          <path d="M1372 1335H2059V1406H1372Z" fill="#808080" opacity=".8" />
          <path d="M1372 1380H2059V1406H1372Z" fill="#949494" filter="url(#b6)" />
          <path d="M1440 1200H1980Q2030 1206 2050 1240" stroke="#e8e8e8" stroke-width="5" fill="none" filter="url(#b6)" />
        </g>
        <g fill="none" stroke="#2a2a2a" stroke-width="2"><path d="M1372 1293H2059M1372 1334H2059M1506 1406H1925M1534 1197H1897M1668 1610H1764" /></g>
        <g fill="none" stroke="#8fbdde" stroke-width="2">
          <path d="M1677 1001C1610 1040 1545 1110 1533 1198M1757 1001C1825 1040 1885 1110 1897 1198" />
          <path d="M1675 1004L1532 1081V1197M1758 1003L1901 1086 1909 1197M1901 1086V1197" />
          <path d="M1462 1198Q1376 1202 1372 1293V1334Q1376 1400 1442 1406M1897 1197H2059V1406H1990M1970 1198Q2059 1202 2059 1293V1334Q2056 1400 1990 1406" />
          <path d="M1505 1406A210 210 0 0 0 1668 1610L1715 1666 1764 1610A210 210 0 0 0 1925 1406" stroke-width="3" />
        </g>
        <path d="M1505 1406Q1505 1424 1508 1440M1918 1456Q1916 1466 1912 1474M1884 1524L1876 1534M1727 1652L1716 1666" fill="none" stroke="#3fae86" stroke-width="4" />
        <g fill="none" stroke="#aaa" stroke-width="2" opacity=".45"><path d="M1532 1230V1290Q1505 1360 1506 1406M1532 1294L1600 1334M1532 1294Q1550 1260 1580 1246M1870 1268L1900 1300M1862 1320L1840 1332M1910 1197Q1918 1300 1925 1406M1900 1200L1904 1330" /></g>
        <g stroke="#c8c8c8" stroke-width="3"><path d="M1715 481V1666" /></g>
        <circle cx="1715" cy="1190" r="6" fill="#888" /><circle cx="1715" cy="1406" r="4" fill="#444" />
        <circle cx="1298" cy="1721" r="14" fill="#2c2643" /><circle cx="1298" cy="1721" r="5" fill="none" stroke="#8a84a4" stroke-width="3" />

        <g class="cube">
          <path d="M3278 288V310M3381 414H3418" stroke="#2c2646" stroke-width="3" />
          <path d="M3280 414H3381V320H3390V430H3280Z" fill="#3a3a3c" />
          <rect x="3276" y="304" width="106" height="6" fill="#3c3b40" />
          <rect x="3277" y="309" width="104" height="105" fill="#868686" stroke="#9d99ae" stroke-width="2" />
          <rect x="3290" y="336" width="78" height="62" fill="#7c7c7c" />
          <path d="M3334 310V414" stroke="#a09fa8" stroke-width="2" />
          <text x="3329" y="371" text-anchor="middle">FRONT</text>
          <path d="M3268 264H3280L3274 276V288" fill="none" stroke="#1f1fb0" stroke-width="6" />
          <path d="M3408 404H3424V428H3408Z" fill="#7c2c48" />
        </g>
      </svg>

      <aside class="browser">
        <header class="panel">
          <button class="collapse" aria-label="Collapse"><svg width="18" height="12" viewBox="0 0 18 12"><path d="M9 0V12L0 6zM18 0V12L9 6z" fill="#222" /></svg></button>
          <span>BROWSER</span>
          <button class="dot" aria-label="Minimise"><svg width="16" height="16" viewBox="0 0 16 16"><circle cx="8" cy="8" r="8" fill="#222" /><path d="M3 8H13" stroke="#ddd" stroke-width="2" /></svg></button>
        </header>
        <ul class="tree">
          <li class="node">
            <svg class="arrow root" width="18" height="16" viewBox="0 0 18 16"><path d="M16 0V14H2z" fill="#111" stroke="#777" stroke-width="1" /></svg>
            <div class="row">
              <button class="eye" aria-label="Toggle visibility"><svg width="32" height="20" viewBox="0 0 32 20"><path d="M0 10Q16 -9 32 10 16 29 0 10z" fill="#959595" /><circle cx="16" cy="10" r="7" fill="#ececec" /><circle cx="16" cy="10" r="4" fill="#959595" /></svg></button>
              <span class="root-name"><svg width="28" height="28" viewBox="0 0 28 28"><path d="M1 5L5 1H27V23L23 27H1z" fill="#e6e6e6" stroke="#555" stroke-width="2" /><path d="M22 6L26 2V22L22 26z" fill="#bbb" /></svg><b>(Unsaved)</b></span>
              <input type="radio" name="active-component" checked aria-label="Activate component" />
            </div>
          </li>
          <li v-for="r in rows" :key="r.label" class="node" :class="'level' + r.level">
            <svg v-if="r.arrow === 'closed'" class="arrow" width="16" height="20" viewBox="0 0 16 20"><path d="M0 -6H14V26H0z" fill="#3d3c3e" /><path d="M1 0H5L8 10 5 20H1z" fill="#1a1a1a" stroke="#999" stroke-width="1" /></svg>
            <svg v-else-if="r.arrow === 'open'" class="arrow" width="16" height="16" viewBox="0 0 16 16"><path d="M15 0V14H1z" fill="#111" stroke="#777" stroke-width="1" /></svg>
            <div class="row">
              <button v-if="r.eye" class="eye" aria-label="Toggle visibility">
                <svg v-if="r.eye === 'on'" width="32" height="20" viewBox="0 0 32 20"><path d="M0 10Q16 -9 32 10 16 29 0 10z" fill="#959595" /><circle cx="16" cy="10" r="7" fill="#ececec" /><circle cx="16" cy="10" r="4" fill="#959595" /></svg>
                <svg v-else width="32" height="22" viewBox="0 0 32 22"><g fill="none" stroke="#888" stroke-width="2"><path d="M1 11Q16 -8 31 11 16 30 1 11z" /><circle cx="16" cy="11" r="6" /><path d="M5 0L27 22" /></g></svg>
              </button>
              <svg v-if="r.kind === 'gear'" width="26" height="26" viewBox="-1 -1 36 38"><path :d="gearPath" fill="#777" fill-rule="evenodd" /></svg>
              <svg v-else-if="r.kind === 'folder'" width="32" height="26" viewBox="0 0 32 26"><path d="M0 6H14L18 2H32V26H0zM0 0H14V3H0z" fill="#999" /></svg>
              <svg v-else width="32" height="30" viewBox="0 0 64 64" v-html="art.tinySketch" />
              <span class="name">{{ r.label }}</span>
            </div>
          </li>
        </ul>
      </aside>

      <div class="panel comments">
        <span>COMMENTS</span>
        <button class="dot" aria-label="Add comment"><svg width="16" height="16" viewBox="0 0 16 16"><rect width="16" height="16" rx="5" fill="#222" /><path d="M2 8H14M8 2V14" stroke="#ddd" stroke-width="2" /></svg></button>
      </div>

      <div class="navbar">
        <button v-for="n in navItems" :key="n.icon" class="nav" :class="n.icon" :aria-label="n.label">
          <svg width="32" height="32" viewBox="0 0 33 33" v-html="nav[n.icon]" /><i v-if="n.caret" class="caret wide" />
        </button>
      </div>

      <button class="assistant" aria-label="Assistant"><svg width="36" height="36" viewBox="0 0 36 36"><path d="M18 1A17 17 0 1 0 18 35H35V18A17 17 0 0 0 18 1z" fill="#050505" stroke="#888" stroke-width="2" /><path d="M9 20L25 11M9 25L27 15M17 25L27 19" stroke="#fff" stroke-width="3" /></svg></button>
    </main>

    <footer class="timeline">
      <div class="playback">
        <button v-for="p in playback" :key="p.label" :aria-label="p.label"><svg width="32" height="32" viewBox="0 0 32 32"><path :d="p.d" fill="#5f5f5f" /></svg></button>
      </div>
      <ol class="history">
        <li v-for="(h, i) in history" :key="i"><button :aria-label="'Feature ' + (i + 1)"><svg width="32" height="32" viewBox="-2 -2 68 68" v-html="art[h]" /></button></li>
      </ol>
      <svg class="marker" width="24" height="64" viewBox="0 0 24 64"><path d="M0 0H24V9L14 20V62H10V20L0 9z" fill="#5c5c5c" /></svg>
      <button class="settings" aria-label="Timeline settings"><svg width="32" height="32" viewBox="-1 -1 36 38"><path :d="gearPath" fill="#6a6a6a" fill-rule="evenodd" /></svg></button>
    </footer>
  </div>
</template>

<style>
body { margin: 0; }
</style>

<style scoped>
.app { display: flex; flex-direction: column; min-height: 100vh; background: #f0f0f0; color: #333; font: 22px/28px "Noto Sans", "Open Sans", sans-serif; }
button { margin: 0; padding: 0; border: 0; background: none; color: inherit; font: inherit; display: flex; align-items: center; justify-content: center; }
svg { display: block; flex: none; overflow: visible; }
.caret { display: block; width: 0; height: 0; border: 6px solid transparent; border-top: 10px solid #333; border-bottom: 0; }
.caret.soft { border-top-color: #5c5c5c; }
.caret.dim { border-top-color: #8a8a8a; }
.caret.wide { border-left-width: 7px; border-right-width: 7px; border-top-width: 9px; border-top-color: #222; }

.titlebar { display: flex; height: 56px; padding-top: 8px; background: #cacaca; }
.quick { display: flex; align-items: center; box-sizing: border-box; width: 388px; height: 48px; padding-left: 17px; }
.q { gap: 10px; }
.file { margin-left: 37px; }
.save { margin-left: 38px; }
.undo { margin-left: 37px; }
.redo { margin-left: 24px; }
.home { width: 84px; padding-top: 6px; background: #bebebe; }
.doc { position: relative; flex: 1; display: flex; align-items: center; justify-content: center; gap: 10px; box-sizing: border-box; padding: 4px 18px 0 0; background: #f0f0f0; font-size: 24px; }
.close { position: absolute; right: 2px; top: 0; width: 32px; height: 38px; box-sizing: border-box; padding-top: 16px; border: 2px solid #b5b5b5; background: #fafafa; }
.newtab { width: 56px; margin-left: 13px; background: #bebebe; }
.status { display: flex; align-items: center; height: 48px; gap: 34px; padding: 0 32px 0 24px; }
.avatar { width: 44px; height: 44px; margin-left: 6px; border-radius: 50%; background: #f2f2f2; font-size: 24px; }

.ribbon { display: flex; height: 170px; padding-left: 24px; background: linear-gradient(#f0f0f0 160px, #fff 160px, #fff 162px, #e0e0e0 162px, #e4e4e4 166px, #fff 166px); }
.design { width: 218px; height: 122px; margin: 20px 11px 0 0; padding-bottom: 2px; gap: 12px; box-sizing: border-box; border: 3px solid #d0d0d0; border-radius: 6px; font-weight: 700; }
.tabs { display: flex; gap: 43px; height: 48px; padding-left: 24px; }
.tab { box-sizing: border-box; height: 47px; padding: 7px 24px 6px; border-bottom: 6px solid transparent; }
.tab.on { color: #1581ad; border-color: #1581ad; }
.groups { display: flex; }
.group { position: relative; display: flex; flex-direction: column; align-items: center; }
.group:not(:last-child)::after { content: ""; position: absolute; right: 0; top: 8px; width: 2px; height: 96px; background: #c6c6c6; }
.icons { display: flex; gap: 10px; height: 76px; }
.tool { width: 76px; height: 76px; }
.chosen { background: #0a96dc; }
.glabel { gap: 6px; height: 28px; margin-top: 4px; }

.canvas { position: relative; flex: 1; background: #433d5b; overflow: hidden; }
.canvas::after { content: ""; position: absolute; inset: 0; pointer-events: none; box-shadow: inset 0 7px 0 -1px #333336, inset 0 -10px 0 -2px #333335; }
.scene { position: absolute; inset: 0; width: 100%; height: 100%; }
.cube text { font: 700 23px "Noto Sans", sans-serif; fill: #555; }
.panel { display: flex; align-items: center; box-sizing: border-box; width: 600px; height: 50px; padding: 0 22px 2px 11px; border: 3px solid #fff; background: #f0f0f0; color: #5c5c5c; box-shadow: 0 6px 4px 4px #3c3b40; }
.panel span { flex: 1; }
.browser { position: absolute; left: 8px; top: 8px; }
.collapse { width: 18px; margin-right: 21px; margin-left: -3px; }
.tree { list-style: none; margin: 10px 0 0; padding: 0; display: flex; flex-direction: column; gap: 8px; }
.node { display: flex; align-items: center; padding-left: 37px; }
.arrow { width: 16px; margin-right: 19px; }
.arrow.root { width: 18px; margin-right: 17px; }
.level1 { padding-left: 73px; }
.level2 { padding-left: 144px; }
.row { display: flex; align-items: center; box-sizing: border-box; height: 40px; padding: 0 24px 2px 6px; background: #f0f0f0; box-shadow: 0 4px 3px 4px #3c3b40; }
.node:first-child .row { padding-right: 14px; }
.eye { width: 32px; margin-right: 18px; }
.name { margin-left: 28px; }
.node:first-child .eye { margin-right: 12px; }
.root-name { display: flex; align-items: center; box-sizing: border-box; height: 34px; padding: 0 18px 0 6px; gap: 30px; border: 2px solid #888; background: #9a9a9a; color: #fff; }
input[type="radio"] { appearance: none; margin: 0 0 0 8px; width: 28px; height: 28px; border: 2px solid #777; border-radius: 50%; background: radial-gradient(#333 0 6px, #f0f0f0 7px); }
.comments { position: absolute; left: 8px; bottom: 8px; padding-left: 47px; }
.navbar { position: absolute; bottom: 12px; left: calc(50% - 235px); display: flex; align-items: center; box-sizing: border-box; height: 48px; padding: 0 6px 0 5px; background: #f0f0f0; box-shadow: 0 4px 2px 3px #3c3b40; }
.nav { gap: 4px; margin-left: 12px; }
.nav.orbit { margin-left: 0; gap: 8px; }
.nav.fit { gap: 8px; }
.nav.hand, .nav.zoom, .nav.fit { margin-left: 20px; }
.assistant { position: absolute; right: 24px; bottom: 8px; box-shadow: 0 0 0 4px #3f3e40; }

.timeline { position: relative; display: flex; align-items: flex-start; box-sizing: border-box; height: 100px; padding: 36px 27px 0 17px; background: linear-gradient(#bdbdbd, #fff 8px, #fff 12px, #f0f0f0 12px); }
.playback { display: flex; gap: 18px; margin-right: 42px; }
.history { display: flex; gap: 16px; margin: 0; padding: 0; list-style: none; }
.history li { position: relative; height: 51px; }
.history li::after { content: ""; position: absolute; left: 15px; bottom: 0; width: 3px; height: 14px; background: #c6c6c6; }
.history li:not(:last-child)::before { content: ""; position: absolute; left: 15px; bottom: 0; width: 51px; height: 3px; background: #c6c6c6; }
.marker { position: absolute; left: 608px; top: 24px; }
.settings { margin-left: auto; }
</style>
